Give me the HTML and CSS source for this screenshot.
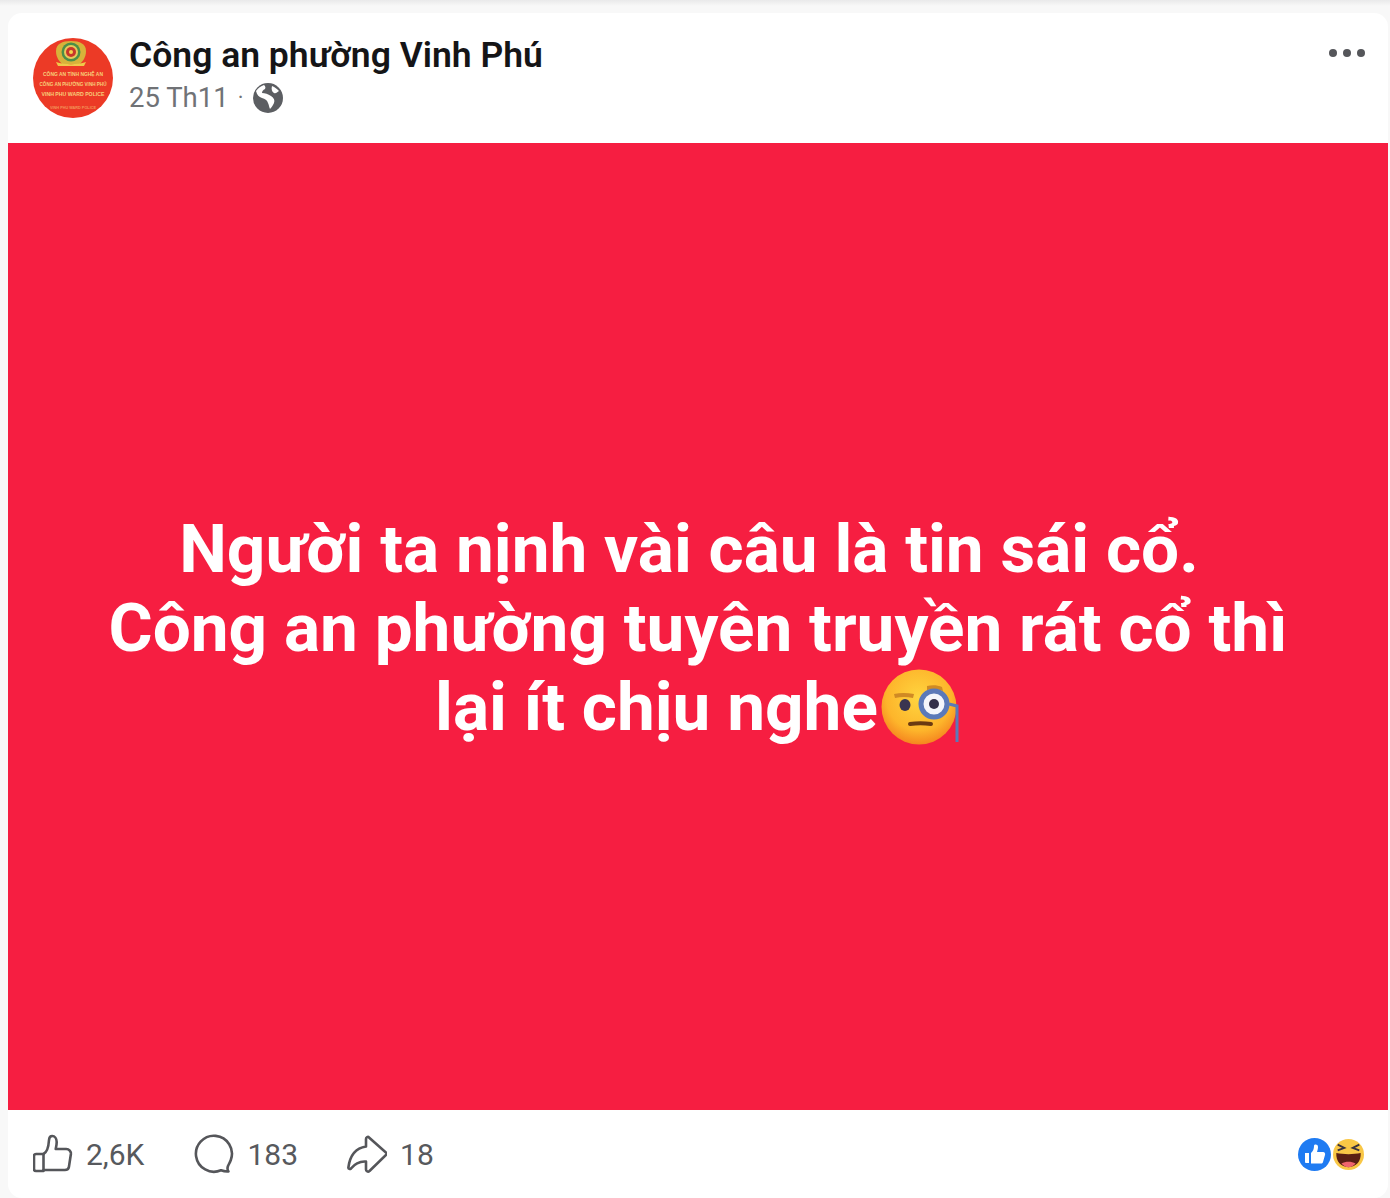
FILE: index.html
```html
<!DOCTYPE html>
<html lang="vi">
<head>
    <meta charset="UTF-8">
    <meta name="viewport" content="width=device-width, initial-scale=1.0">
    <title>Công an phường Vinh Phú</title>
    <link rel="stylesheet" href="styles.css">
</head>
<body>
    <div class="card">
        <div class="post-header">
            <svg class="avatar" viewBox="0 0 80 80">
                <circle cx="40" cy="40" r="40" fill="#ec3a26"/>
                <path d="M38 3c9 0 15 3 15 10 0 6-3 10-6 13H29c-3-3-6-7-6-13 0-7 6-10 15-10z" fill="#d7b23a"/>
                <circle cx="38" cy="14" r="9.500" fill="#4c8f48"/>
                <circle cx="38" cy="14" r="7" fill="#e9c95a"/>
                <circle cx="38" cy="14" r="5" fill="#c8372a"/>
                <circle cx="38" cy="14" r="2" fill="#f3d34a"/>
                <path d="M23 24c9 3 21 3 30 0l-2 4H25z" fill="#efc94a"/>
                <text class="avatar-text" x="40" y="38" textLength="60" lengthAdjust="spacingAndGlyphs">CÔNG AN TỈNH NGHỆ AN</text>
                <text class="avatar-text" x="40" y="48" textLength="67" lengthAdjust="spacingAndGlyphs">CÔNG AN PHƯỜNG VINH PHÚ</text>
                <text class="avatar-text" x="40" y="58" textLength="63" lengthAdjust="spacingAndGlyphs">VINH PHU WARD POLICE</text>
                <text class="avatar-text avatar-small" x="40" y="71" textLength="46" lengthAdjust="spacingAndGlyphs">VINH PHU WARD POLICE</text>
            </svg>
            <div class="post-meta">
                <div class="page-name">Công an phường Vinh Phú</div>
                <div class="post-time">
                    <span class="time-label">25 Th11</span>
                    <span class="time-dot">·</span>
                    <svg class="globe" viewBox="0 0 30 30">
                        <circle cx="15" cy="15" r="15" fill="#5c5e62"/>
                        <path d="M3 8c2-3 5-5 8-6 1 1 2 2 1 4-2 1-3 2-3 4 3 0 6 1 9 3 3 2 4 4 3 7-1 2-2 4-4 6-1-2-1-4-2-6-1-3-3-4-6-5-3-1-5-3-6-7z" fill="#fff"/>
                        <path d="M19 3c3 1 5 3 7 5-2 1-3 3-5 2s-3-4-2-7z" fill="#fff"/>
                    </svg>
                </div>
            </div>
            <div class="more-btn"><span></span><span></span><span></span></div>
        </div>

        <div class="post-body">
            <p class="post-text"><span class="first-line">Người ta nịnh vài câu là tin sái cổ.</span><br>Công an phường tuyên truyền rát cổ thì<br>lại ít chịu nghe<svg class="monocle" viewBox="0 0 80 78">
                <defs>
                    <radialGradient id="faceFill" cx="50%" cy="38%" r="62%">
                        <stop offset="0" stop-color="#ffd53f"/>
                        <stop offset="0.7" stop-color="#fdb52b"/>
                        <stop offset="1" stop-color="#f5861f"/>
                    </radialGradient>
                </defs>
                <circle cx="38" cy="38" r="37.500" fill="url(#faceFill)"/>
                <path d="M13 25c6-1.500 13-1.500 20 0l-1 4c-6-1.500-12-1.500-18 0z" fill="#d08a24"/>
                <path d="M46 17c5-1.500 11-1 15 1l1 4c-5-2-10-2-16-1z" fill="#d08a24"/>
                <ellipse cx="24" cy="36" rx="5.500" ry="6" fill="#3a3550"/>
                <circle cx="53" cy="35" r="13" fill="#f3f5fb" stroke="#5b79b8" stroke-width="5"/>
                <circle cx="53" cy="35" r="5" fill="#33304a"/>
                <path d="M68 35l8 2v36" fill="none" stroke="#5b79b8" stroke-width="3"/>
                <path d="M29 55c7-1 14-1 21 0" fill="none" stroke="#6b3a12" stroke-width="4" stroke-linecap="round"/>
            </svg></p>
        </div>

        <div class="post-footer">
            <div class="stat stat-like">
                <svg class="stat-icon" viewBox="0 0 40 40">
                    <path d="M3 20h7.500v17H3a2 2 0 0 1-2-2V22a2 2 0 0 1 2-2z"/>
                    <path d="M10.500 20c3-1.500 5-6 5.500-14 .2-3 1.600-4 3.200-4 2.500 0 4.500 2.500 4.500 6 0 2.500-.5 5-1 7h10.500c3 0 5 2.500 4.700 5l-2 13c-.3 2-2 3-4 3H10.500"/>
                </svg>
                <span>2,6K</span>
            </div>
            <div class="stat stat-comment">
                <svg class="stat-icon" viewBox="0 0 40 40">
                    <path d="M36.800 26A18 18 0 1 0 27 36.300c2.500 1 5 1.400 7.500 1.200-1.200-1.500-1.200-3.500-.5-5.500.9-1.900 2-3.800 2.800-6z"/>
                </svg>
                <span>183</span>
            </div>
            <div class="stat stat-share">
                <svg class="stat-icon" viewBox="0 0 40 40">
                    <path d="M22 3.500L39.500 19a1 1 0 0 1 0 1.500L22.500 37c-1.500 1.200-3.500.3-3.500-1.500V27.500C12 27 7.500 30 4 34.500c-1 1-2.800.4-2.600-1C3 21 9 14 19 12.500V5c0-1.800 2-2.700 3-1.500z"/>
                </svg>
                <span>18</span>
            </div>
            <div class="reactions">
                <svg class="reaction" viewBox="0 0 33 33">
                    <circle cx="16.500" cy="16.500" r="16.500" fill="#1f7bf2"/>
                    <path d="M7 15h4v10H8a1 1 0 0 1-1-1z" fill="#fff"/>
                    <path d="M13 15c2-2 3-4 3-7 0-2 4-2 4 1 0 2-.5 3-1 5h6c2 0 2.500 2 2 3l-2 7c-.3 1-1 1.500-2 1.500h-10z" fill="#fff"/>
                </svg>
                <svg class="reaction reaction-haha" viewBox="0 0 33 33">
                    <circle cx="16.500" cy="16.500" r="16.500" fill="#f9c746"/>
                    <path d="M5 6l7 3.500-7 2.500M28 6l-7 3.500 7 2.500" fill="none" stroke="#3a3340" stroke-width="2"/>
                    <path d="M3.500 15c8 1.500 18 1.500 26 0 .5 9-5 15-13 15S3 24 3.500 15z" fill="#5a1f14"/>
                    <path d="M9 26c4.500-2.500 10.500-2.500 15 0-2 2.500-4.500 4-7.500 4S11 28.500 9 26z" fill="#f0656d"/>
                </svg>
            </div>
        </div>
    </div>
</body>
</html>
```

FILE: styles.css
```css
html, body {
    margin: 0;
    height: 100%;
}
body {
    height: 1198px;
    overflow: hidden;
    background: linear-gradient(#e9e9ea, #f8f8f8 6px);
    font-family: Roboto, "Liberation Sans", sans-serif;
    padding: 13px 2px 0 8px;
    box-sizing: border-box;
}
.card {
    background: #fff;
    border-radius: 14px;
    height: 1185px;
    display: flex;
    flex-direction: column;
    overflow: hidden;
}
.post-header {
    height: 130px;
    display: flex;
    align-items: flex-start;
    padding: 25px 23px 0 25px;
    box-sizing: border-box;
    flex-shrink: 0;
}
.avatar {
    width: 80px;
    height: 80px;
    flex-shrink: 0;
}
.avatar-text {
    font-family: "Liberation Sans", sans-serif;
    font-size: 5px;
    font-weight: bold;
    fill: #f7cf7a;
    text-anchor: middle;
}
.avatar-small {
    font-size: 3.500px;
    opacity: 0.6;
}
.post-meta {
    margin-left: 17px;
    flex: 1;
}
.page-name {
    font-size: 35.500px;
    font-weight: 600;
    line-height: 42px;
    margin-top: -4px;
    margin-left: -1px;
    color: #151517;
}
.post-time {
    display: flex;
    align-items: center;
    margin-top: 3px;
    font-size: 27.500px;
    line-height: 38px;
    color: #707276;
}
.time-label {
    margin-left: -1px;
}
.time-dot {
    font-size: 22px;
    margin: 0 10px 0 9px;
}
.globe {
    width: 30px;
    height: 30px;
}
.more-btn {
    display: flex;
    gap: 6px;
    margin-top: 11px;
}
.more-btn span {
    width: 8px;
    height: 8px;
    border-radius: 50%;
    background: #55565a;
}
.post-body {
    height: 967px;
    background: #f61e41;
    display: flex;
    align-items: center;
    justify-content: center;
    flex-shrink: 0;
}
.post-text {
    margin: 3px 0 0;
    color: #fff;
    font-size: 67.500px;
    font-weight: 700;
    line-height: 79px;
    text-align: center;
}
.first-line {
    margin-right: 18px;
}
.monocle {
    width: 80px;
    height: 78px;
    margin-left: 3px;
    vertical-align: -17px;
}
.post-footer {
    flex: 1;
    display: flex;
    align-items: flex-start;
    padding: 24px 24px 0 25px;
}
.stat {
    display: flex;
    align-items: center;
    gap: 13px;
    height: 40px;
    font-size: 30px;
    color: #57595d;
}
.stat span {
    padding-top: 1px;
}
.stat-icon {
    width: 40px;
    height: 40px;
    fill: none;
    stroke: #55565a;
    stroke-width: 2.600;
    stroke-linejoin: round;
    stroke-linecap: round;
}
.stat-like {
    margin-right: 50px;
}
.stat-comment {
    margin-right: 49px;
}
.reactions {
    margin-left: auto;
    display: flex;
    align-items: center;
    margin-top: 4px;
}
.reaction {
    width: 33px;
    height: 33px;
}
.reaction-haha {
    width: 31px;
    height: 31px;
    margin-left: 2px;
}
```
